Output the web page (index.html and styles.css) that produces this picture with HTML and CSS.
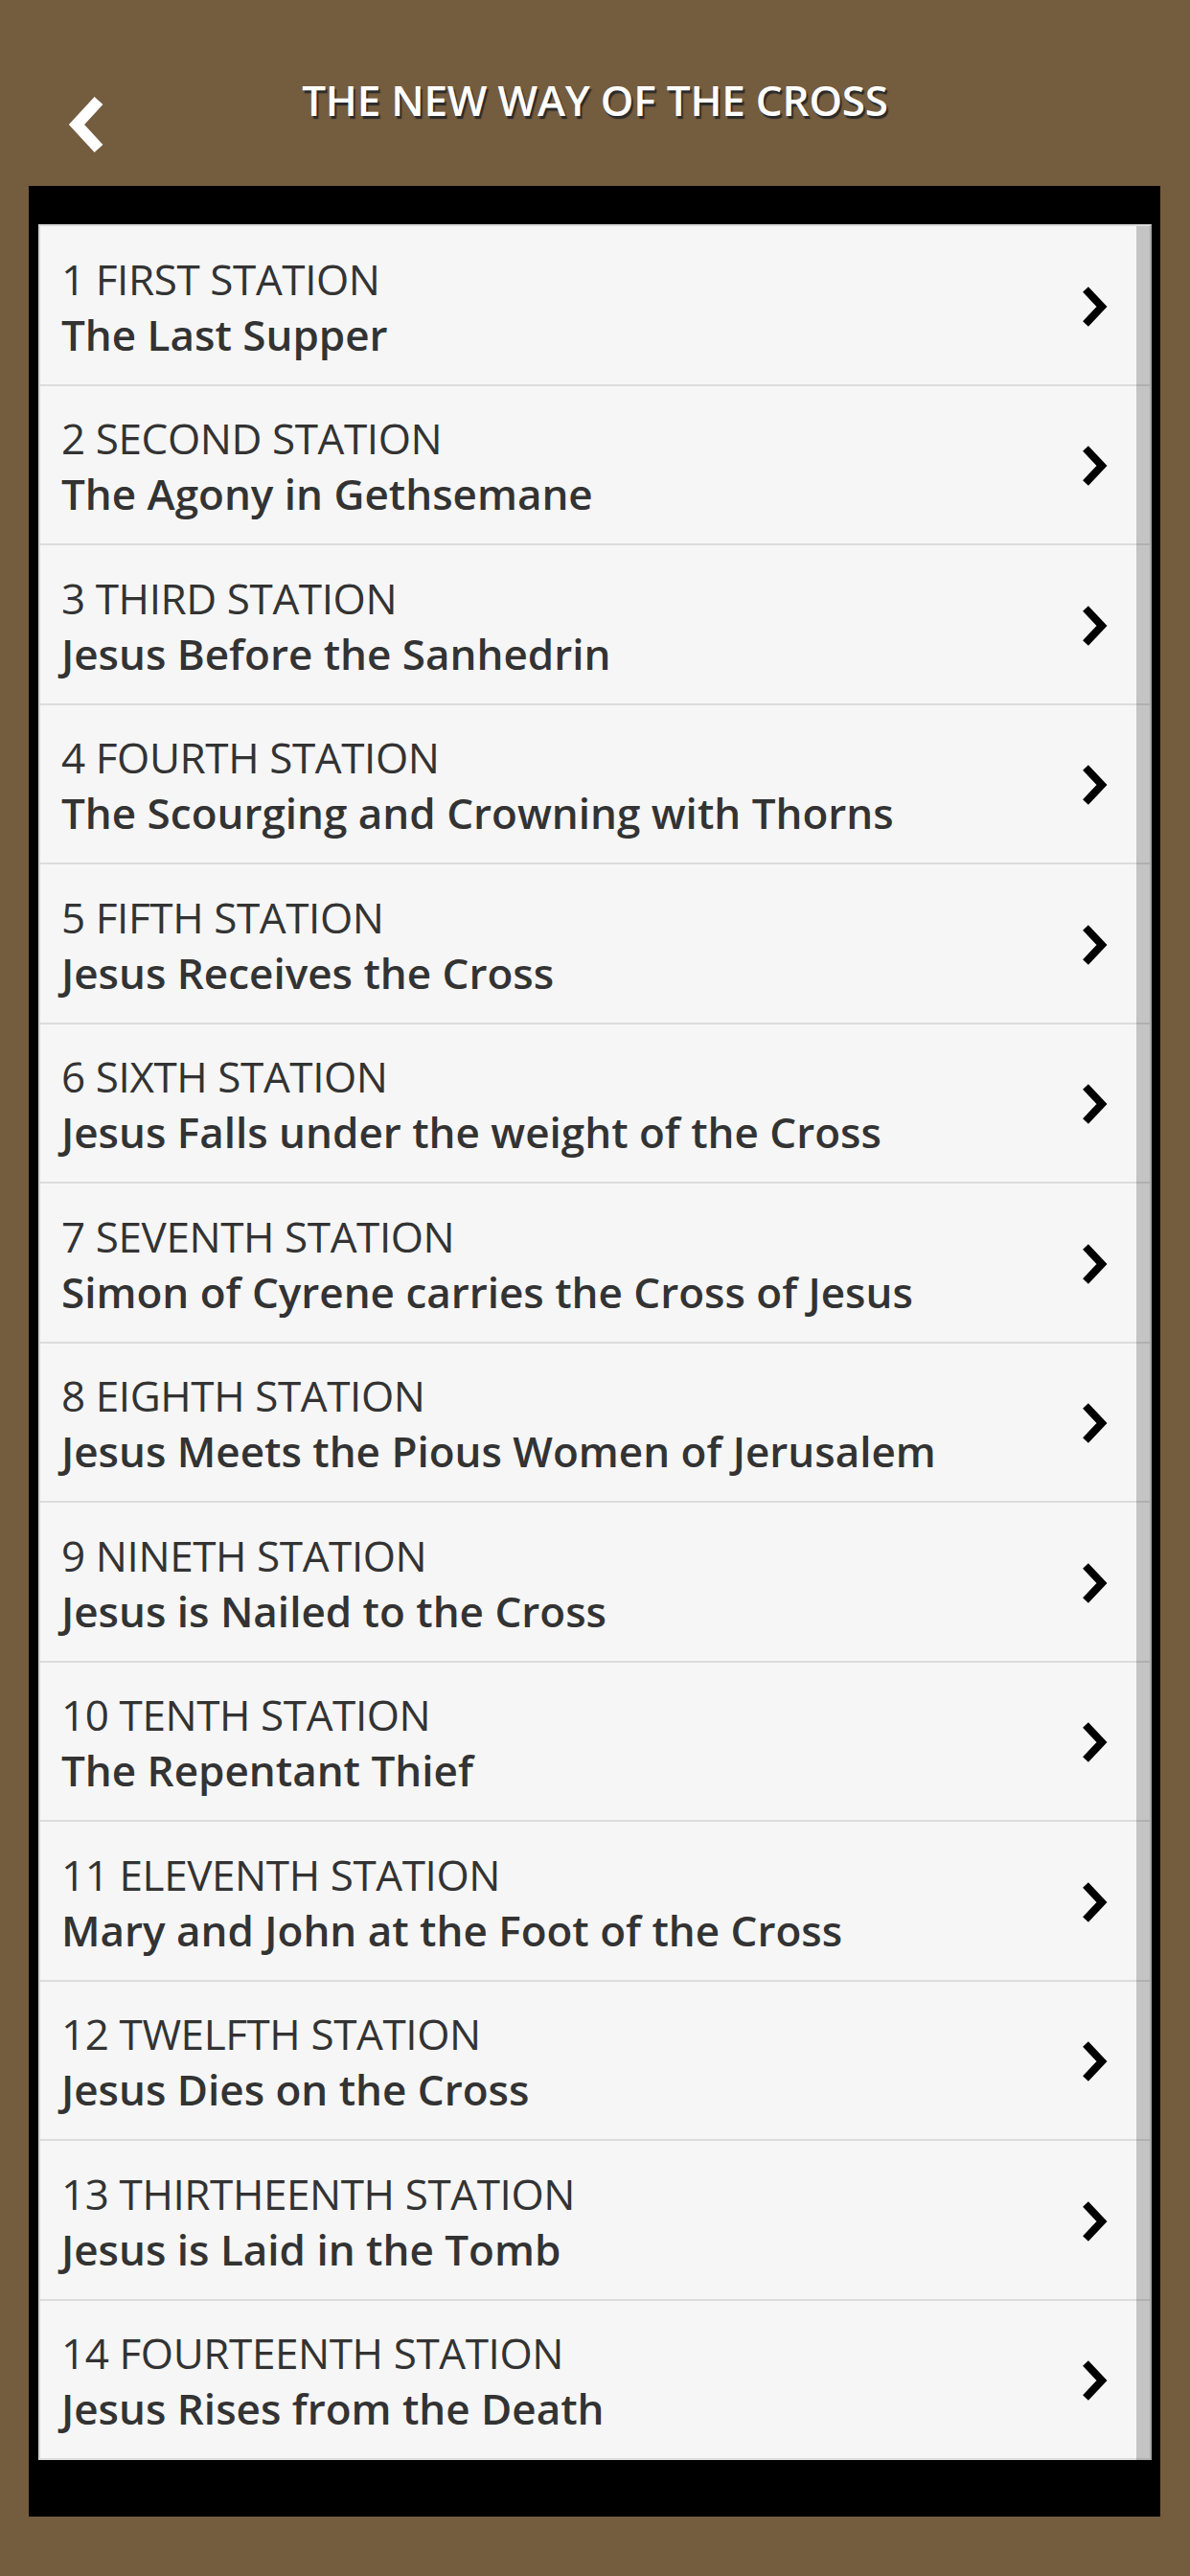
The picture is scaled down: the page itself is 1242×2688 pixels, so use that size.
FILE: index.html
```html
<!DOCTYPE html>
<html lang="en">
<head>
  <meta charset="UTF-8">
  <meta name="viewport" content="width=device-width, initial-scale=1.0">
  <title>The New Way of the Cross</title>
  <link rel="stylesheet" href="styles.css">
</head>
<body>
  <header class="topbar">
    <a href="#" class="back" aria-label="Back">
      <svg width="40" height="62" viewBox="0 0 40 62"><polyline points="33,6 10,31 33,56" fill="none" stroke="#fff" stroke-width="12" stroke-linejoin="miter"/></svg>
    </a>
    <h1 class="title">THE NEW WAY OF THE CROSS</h1>
    <span></span>
  </header>

  <main class="frame">
    <div class="list">
      <ul class="stations">
        <li><a href="#" class="station"><div class="station-text"><span class="station-num">1 FIRST STATION</span><span class="station-name">The Last Supper</span></div><svg class="chev" width="30" height="46" viewBox="0 0 30 46"><polyline points="6,5 23,23 6,41"/></svg></a></li>
        <li><a href="#" class="station"><div class="station-text"><span class="station-num">2 SECOND STATION</span><span class="station-name">The Agony in Gethsemane</span></div><svg class="chev" width="30" height="46" viewBox="0 0 30 46"><polyline points="6,5 23,23 6,41"/></svg></a></li>
        <li><a href="#" class="station"><div class="station-text"><span class="station-num">3 THIRD STATION</span><span class="station-name">Jesus Before the Sanhedrin</span></div><svg class="chev" width="30" height="46" viewBox="0 0 30 46"><polyline points="6,5 23,23 6,41"/></svg></a></li>
        <li><a href="#" class="station"><div class="station-text"><span class="station-num">4 FOURTH STATION</span><span class="station-name">The Scourging and Crowning with Thorns</span></div><svg class="chev" width="30" height="46" viewBox="0 0 30 46"><polyline points="6,5 23,23 6,41"/></svg></a></li>
        <li><a href="#" class="station"><div class="station-text"><span class="station-num">5 FIFTH STATION</span><span class="station-name">Jesus Receives the Cross</span></div><svg class="chev" width="30" height="46" viewBox="0 0 30 46"><polyline points="6,5 23,23 6,41"/></svg></a></li>
        <li><a href="#" class="station"><div class="station-text"><span class="station-num">6 SIXTH STATION</span><span class="station-name">Jesus Falls under the weight of the Cross</span></div><svg class="chev" width="30" height="46" viewBox="0 0 30 46"><polyline points="6,5 23,23 6,41"/></svg></a></li>
        <li><a href="#" class="station"><div class="station-text"><span class="station-num">7 SEVENTH STATION</span><span class="station-name">Simon of Cyrene carries the Cross of Jesus</span></div><svg class="chev" width="30" height="46" viewBox="0 0 30 46"><polyline points="6,5 23,23 6,41"/></svg></a></li>
        <li><a href="#" class="station"><div class="station-text"><span class="station-num">8 EIGHTH STATION</span><span class="station-name">Jesus Meets the Pious Women of Jerusalem</span></div><svg class="chev" width="30" height="46" viewBox="0 0 30 46"><polyline points="6,5 23,23 6,41"/></svg></a></li>
        <li><a href="#" class="station"><div class="station-text"><span class="station-num">9 NINETH STATION</span><span class="station-name">Jesus is Nailed to the Cross</span></div><svg class="chev" width="30" height="46" viewBox="0 0 30 46"><polyline points="6,5 23,23 6,41"/></svg></a></li>
        <li><a href="#" class="station"><div class="station-text"><span class="station-num">10 TENTH STATION</span><span class="station-name">The Repentant Thief</span></div><svg class="chev" width="30" height="46" viewBox="0 0 30 46"><polyline points="6,5 23,23 6,41"/></svg></a></li>
        <li><a href="#" class="station"><div class="station-text"><span class="station-num">11 ELEVENTH STATION</span><span class="station-name">Mary and John at the Foot of the Cross</span></div><svg class="chev" width="30" height="46" viewBox="0 0 30 46"><polyline points="6,5 23,23 6,41"/></svg></a></li>
        <li><a href="#" class="station"><div class="station-text"><span class="station-num">12 TWELFTH STATION</span><span class="station-name">Jesus Dies on the Cross</span></div><svg class="chev" width="30" height="46" viewBox="0 0 30 46"><polyline points="6,5 23,23 6,41"/></svg></a></li>
        <li><a href="#" class="station"><div class="station-text"><span class="station-num">13 THIRTHEENTH STATION</span><span class="station-name">Jesus is Laid in the Tomb</span></div><svg class="chev" width="30" height="46" viewBox="0 0 30 46"><polyline points="6,5 23,23 6,41"/></svg></a></li>
        <li><a href="#" class="station"><div class="station-text"><span class="station-num">14 FOURTEENTH STATION</span><span class="station-name">Jesus Rises from the Death</span></div><svg class="chev" width="30" height="46" viewBox="0 0 30 46"><polyline points="6,5 23,23 6,41"/></svg></a></li>
      </ul>
      <div class="scrollbar"></div>
    </div>
  </main>
</body>
</html>
```

FILE: styles.css
```css
body {
  font-family: 'Open Sans', 'Noto Sans', sans-serif;
  background-color: #745c3e;
  color: #333;
  margin: 0;
  min-height: 100vh;
}
.topbar {
  height: 194px;
  display: grid;
  grid-template-columns: 1fr auto 1fr;
  align-items: start;
}
.back {
  display: block;
  width: 40px;
  margin: 99px 0 0 70px;
}
.back svg {
  display: block;
}
.title {
  margin: 74px 0 0;
  font-size: 44px;
  line-height: 60px;
  font-weight: 600;
  letter-spacing: -0.2px;
  color: #fff;
  text-shadow: 2px 3px 1px #2a2a2a;
}
.frame {
  margin: 0 31px 0 30px;
  background-color: #000;
  padding: 40px 9px 59px 10px;
}
.list {
  position: relative;
  background-color: #f6f6f6;
  border-top: 2px solid #dcdcdc;
  border-left: 2px solid #d4d4d4;
  border-right: 2px solid #a8a8a8;
}
.stations {
  list-style: none;
  margin: 0;
  padding: 0;
}
.station {
  display: flex;
  align-items: center;
  justify-content: space-between;
  box-sizing: border-box;
  height: 166.5px;
  padding: 3px 43px 0 22px;
  border-bottom: 2px solid #dcdcdc;
  color: #333;
  text-decoration: none;
}
.station-text {
  display: flex;
  flex-direction: column;
  font-size: 44px;
  line-height: 58px;
}
.station-num {
  font-weight: 400;
  letter-spacing: -0.4px;
}
.station-name {
  font-weight: 600;
}
.chev {
  display: block;
  flex-shrink: 0;
}
.chev polyline {
  fill: none;
  stroke: #000;
  stroke-width: 8;
  stroke-linejoin: miter;
}
.scrollbar {
  position: absolute;
  top: 0;
  right: 0;
  bottom: 0;
  width: 14px;
  background-color: rgba(0, 0, 0, 0.2);
}
```
